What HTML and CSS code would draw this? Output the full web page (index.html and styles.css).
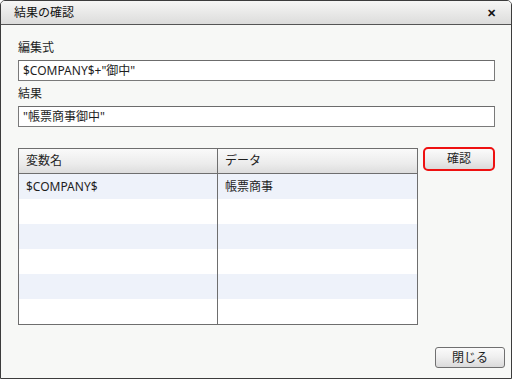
FILE: index.html
```html
<!DOCTYPE html>
<html lang="ja">
<head>
<meta charset="utf-8">
<link rel="stylesheet" href="styles.css">
</head>
<body>
<div class="dialog">
  <div class="titlebar">
    <span class="title">結果の確認</span>
    <span class="close">✕</span>
  </div>
  <div class="content">
    <div class="label">編集式</div>
    <div class="field">$COMPANY$+"御中"</div>
    <div class="label second">結果</div>
    <div class="field">"帳票商事御中"</div>
    <div class="tablearea">
      <div class="grid">
        <div class="row head"><div class="cell">変数名</div><div class="cell">データ</div></div>
        <div class="row alt"><div class="cell">$COMPANY$</div><div class="cell">帳票商事</div></div>
        <div class="row"><div class="cell"></div><div class="cell"></div></div>
        <div class="row alt"><div class="cell"></div><div class="cell"></div></div>
        <div class="row"><div class="cell"></div><div class="cell"></div></div>
        <div class="row alt"><div class="cell"></div><div class="cell"></div></div>
        <div class="row"><div class="cell"></div><div class="cell"></div></div>
      </div>
      <button class="btn confirm">確認</button>
    </div>
    <div class="footer">
      <button class="btn closebtn">閉じる</button>
    </div>
  </div>
</div>
</body>
</html>
```

FILE: styles.css
```css
* { box-sizing: border-box; }
html, body {
  margin: 0;
  padding: 0;
  background: #ffffff;
}
body {
  font-family: "Noto Sans", "Noto Sans CJK JP", sans-serif;
  font-size: 12px;
  color: #1e1e1e;
}
.dialog {
  width: 512px;
  height: 379px;
  border: 1px solid #3c3c3c;
  border-radius: 5px 5px 0 0;
  background: #f7f8f6;
  display: flex;
  flex-direction: column;
  overflow: hidden;
}
.titlebar {
  height: 24px;
  flex: none;
  border-bottom: 1px solid #555;
  background: linear-gradient(#f6f6f5, #e9e9e8 50%, #dcdcdb);
  display: flex;
  align-items: center;
  justify-content: space-between;
  padding: 0 13px 0 13px;
}
.title {
  font-size: 12px;
  line-height: 16px;
  color: #111;
}
.close {
  font-size: 11px;
  font-weight: bold;
  color: #111;
  line-height: 12px;
  margin-right: 2px;
}
.content {
  flex: 1;
  display: flex;
  flex-direction: column;
  padding: 15px 16px 10px 17px;
}
.label {
  line-height: 16px;
  height: 16px;
  margin-bottom: 4px;
}
.label.second {
  margin-top: 5px;
}
.field {
  height: 21px;
  width: 477px;
  border: 1px solid #7a7a7a;
  border-top-color: #6c6c6c;
  background: #fff;
  padding: 0 4px;
  line-height: 19px;
  white-space: nowrap;
}
.tablearea {
  display: flex;
  align-items: flex-start;
  margin-top: 21px;
}
.grid {
  width: 400px;
  border: 1px solid #6e6e6e;
  background: #fff;
}
.row {
  display: grid;
  grid-template-columns: 199px 1fr;
  height: 25px;
}
.row .cell {
  padding: 0 7px;
  line-height: 25px;
  white-space: nowrap;
}
.row .cell:first-child {
  border-right: 1px solid #6e6e6e;
}
.row.head {
  height: 25px;
  border-bottom: 1px solid #6e6e6e;
  background: linear-gradient(#fafafa, #ececec 60%, #dddddd);
}
.row.head .cell {
  line-height: 24px;
}
.row.alt {
  background: #eef2fa;
}
.btn {
  font-family: "Noto Sans", "Noto Sans CJK JP", sans-serif;
  font-size: 12px;
  color: #1e1e1e;
  background: linear-gradient(#fbfbfb, #eeeeee 50%, #dadada);
  border: 1px solid #707070;
  border-radius: 3px;
  padding: 0;
  margin: 0;
}
.confirm {
  width: 72px;
  height: 24px;
  margin-left: 5px;
  margin-top: -1px;
  border: 2px solid #ee1111;
  border-radius: 5px;
  line-height: 18px;
}
.footer {
  margin-top: auto;
  display: flex;
  justify-content: flex-end;
  margin-right: -10px;
}
.closebtn {
  width: 70px;
  height: 21px;
  line-height: 17px;
}
```
